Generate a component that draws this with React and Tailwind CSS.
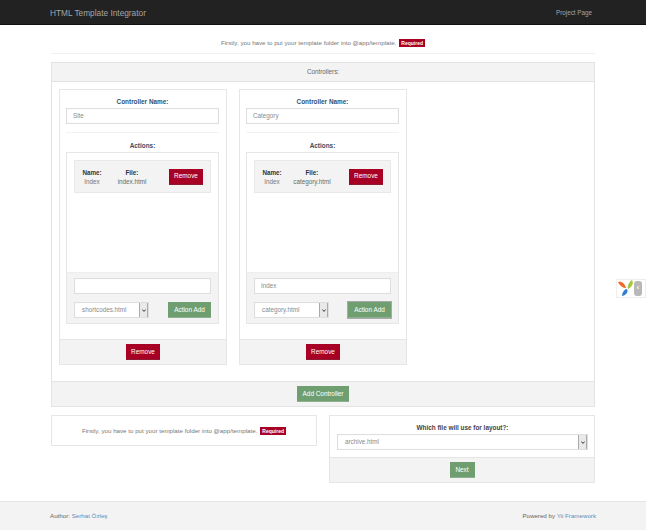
const fieldClass =
  "h-[16px] bg-white border border-[#dedede] shadow-[inset_0_0_1px_rgba(0,0,0,0.1)] flex items-center text-[6.3px] text-[#8a8a8a]";

const Button = ({ label, red, focused, width }) => (
  <button
    className={`h-[16px] ${width} text-[6.4px] text-white flex items-center justify-center shrink-0 ${
      red ? "bg-[#a80024] border-b border-[#8c1a30]" : "bg-[#6f9f70] border-b border-[#8db08e]"
    } ${focused ? "bg-[#5c8a5e] outline-1 outline-[#a9a9a9]" : ""}`}
  >
    {label}
  </button>
);

const Select = ({ value, width }) => (
  <div className={`${fieldClass} ${width} justify-between`}>
    <span className="pl-[7px]">{value}</span>
    <span className="h-full w-[9px] bg-[#e9e9e9] border-x border-[#aaaaaa] flex items-center justify-center">
      <svg width="4" height="3" viewBox="0 0 4 3">
        <path d="M0.3 0.5 L2 2.4 L3.7 0.5" fill="none" stroke="#222222" strokeWidth="0.9" />
      </svg>
    </span>
  </div>
);

const Badge = () => (
  <span className="inline-block bg-[#a80024] text-white text-[5px] font-bold leading-[8px] px-[2px] ml-[3px] align-middle">
    Required
  </span>
);

const ControllerCard = ({ name, file, selected, actionName, focused }) => (
  <div className="w-[168px] h-[276px] border border-[#e6e6e6] flex flex-col">
    <div className="pl-[6px] pr-[7px] pt-[7px] flex-1">
      <div className="text-[6.4px] font-bold text-[#34506b] text-center leading-[9px]">Controller Name:</div>
      <div className={`${fieldClass} mt-[2px] px-[6px]`}>{name}</div>
      <div className="border-t border-[#f2f2f2] mt-[8px]"></div>
      <div className="text-[6.4px] font-bold text-[#34506b] text-center leading-[9px] mt-[8px]">Actions:</div>
      <div className="mt-[2px] h-[172px] border border-[#e6e6e6] flex flex-col">
        <div className="flex-1 px-[7px] pt-[7px]">
          <div className="h-[33px] bg-[#f3f3f3] border border-[#e8e8e8] flex items-center">
            <div className="w-[26px] ml-[4px] text-center text-[6.3px] leading-[9px]">
              <div className="font-bold text-[#333333]">Name:</div>
              <div className="text-[#777777]">Index</div>
            </div>
            <div className="w-[48px] ml-[3px] text-center text-[6.3px] leading-[9px]">
              <div className="font-bold text-[#333333]">File:</div>
              <div className="text-[#55706f]">{file}</div>
            </div>
            <div className="ml-auto mr-[7px]">
              <Button label="Remove" red width="w-[34px]" />
            </div>
          </div>
        </div>
        <div className="h-[51px] bg-[#f3f3f3] border-t border-[#eeeeee] px-[7px] pt-[5px]">
          <div className={`${fieldClass} px-[6px]`}>{actionName}</div>
          <div className="flex justify-between mt-[8px]">
            <Select value={selected} width="w-[75px]" />
            <Button label="Action Add" focused={focused} width="w-[43px]" />
          </div>
        </div>
      </div>
    </div>
    <div className="h-[25px] bg-[#f3f3f3] border-t border-[#e6e6e6] flex items-center justify-center">
      <Button label="Remove" red width="w-[34px]" />
    </div>
  </div>
);

export default function App() {
  return (
    <div className="relative w-[646px] h-[530px] bg-white overflow-hidden font-['Liberation_Sans',Arial,sans-serif]">
      {/* Navbar */}
      <nav className="h-[25px] bg-[#222222] border-b border-[#111111] flex items-center justify-between pl-[50px] pr-[54px] pt-[2px]">
        <span className="text-[8.3px] text-[#a5a5a5]">HTML Template Integrator</span>
        <span className="text-[6.3px] text-[#a5a5a5]">Project Page</span>
      </nav>

      <div className="w-[544px] ml-[51px]">
        {/* Hint */}
        <div className="h-[29px] border-b border-[#f0f0f0] flex items-center justify-center pt-[7px] text-[6.2px] text-[#777777]">
          <span>
            Firstly, you have to put your template folder into @app/template.
            <Badge />
          </span>
        </div>

        {/* Controllers panel */}
        <div className="mt-[8px] h-[345px] border border-[#e3e3e3] flex flex-col">
          <div className="h-[19px] bg-[#f3f3f3] border-b border-[#e3e3e3] flex items-center justify-center text-[6.3px] text-[#666666]">
            Controllers:
          </div>
          <div className="flex-1 flex gap-[12px] pl-[7px] pt-[7px]">
            <ControllerCard name="Site" file="index.html" selected="shortcodes.html" actionName="" />
            <ControllerCard name="Category" file="category.html" selected="category.html" actionName="Index" focused />
          </div>
          <div className="h-[25px] bg-[#f3f3f3] border-t border-[#e3e3e3] flex items-center justify-center">
            <Button label="Add Controller" width="w-[52px]" />
          </div>
        </div>

        {/* Bottom row */}
        <div className="flex justify-between items-start mt-[8px]">
          <div className="w-[266px] h-[31px] border border-[#e6e6e6] flex items-center justify-center text-[6.2px] text-[#777777]">
            <span>
              Firstly, you have to put your template folder into @app/template.
              <Badge />
            </span>
          </div>
          <div className="w-[266px] h-[68px] border border-[#e6e6e6] flex flex-col">
            <div className="h-[41px] pl-[7px] pr-[6px] pt-[7px]">
              <div className="text-[6.4px] font-bold text-[#444444] text-center leading-[9px]">
                Which file will use for layout?:
              </div>
              <div className="mt-[2px]">
                <Select value="archive.html" width="w-full" />
              </div>
            </div>
            <div className="flex-1 bg-[#f3f3f3] border-t border-[#e6e6e6] flex items-center justify-center">
              <Button label="Next" width="w-[25px]" />
            </div>
          </div>
        </div>
      </div>

      {/* Footer */}
      <footer className="mt-[18px] h-[29px] bg-[#f3f3f3] border-t border-[#e6e6e6] flex items-center justify-between px-[50px] text-[6.2px] text-[#666666]">
        <span>
          Author: <span className="text-[#5b8db8]">Serhat Özleş</span>
        </span>
        <span>
          Powered by <span className="text-[#5b8db8]">Yii Framework</span>
        </span>
      </footer>

      {/* Yii debug toolbar tab */}
      <div className="absolute left-[616px] top-[279px] w-[30px] h-[19px] bg-white border border-[#eeeeee] flex items-center">
        <svg width="18" height="17" viewBox="0 0 18 17" className="shrink-0">
          <path d="M1 2 C5 1 8 4 9 8 C6 8 3 6 1 2 Z" fill="#f0682a" />
          <path d="M15 0 C17 3 15 7 11 9 C10 6 12 2 15 0 Z" fill="#a3c93a" />
          <path d="M9 9 C11 9 11 12 9 14 C8 15 6 16 5 16 C5 13 7 10 9 9 Z" fill="#2f7fd1" />
        </svg>
        <span className="ml-[-1px] w-[8px] h-[15px] bg-[#b8b8b8] rounded-[3px] text-white text-[7px] font-bold flex items-center justify-center">
          ‹
        </span>
      </div>
    </div>
  );
}
